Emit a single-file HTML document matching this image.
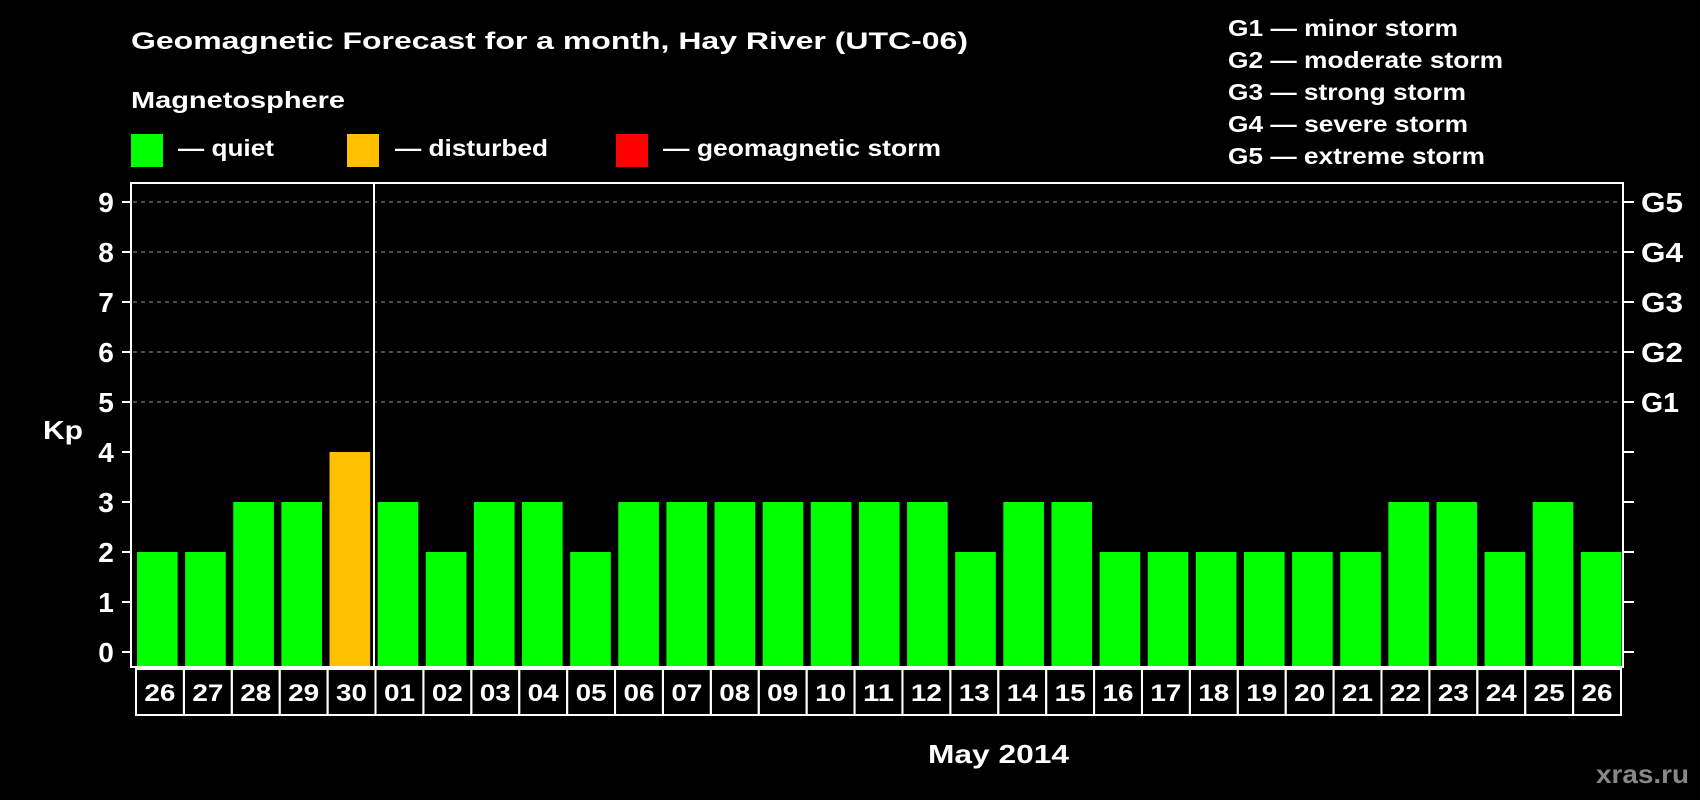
<!DOCTYPE html>
<html><head><meta charset="utf-8"><style>
html,body{margin:0;padding:0;background:#000;}
svg{display:block;font-family:"Liberation Sans",Arial,sans-serif;font-weight:bold;}
</style></head><body>
<svg width="1700" height="800" viewBox="0 0 1700 800" xmlns="http://www.w3.org/2000/svg">
<rect width="1700" height="800" fill="#000"/>
<g fill="#fff" lengthAdjust="spacingAndGlyphs">
<text x="131" y="49" font-size="24" textLength="837" lengthAdjust="spacingAndGlyphs">Geomagnetic Forecast for a month, Hay River (UTC-06)</text>
<text x="131" y="108" font-size="23" textLength="214" lengthAdjust="spacingAndGlyphs">Magnetosphere</text>
<text x="178" y="156" font-size="23" textLength="96" lengthAdjust="spacingAndGlyphs">— quiet</text>
<text x="395" y="156" font-size="23" textLength="153" lengthAdjust="spacingAndGlyphs">— disturbed</text>
<text x="663" y="156" font-size="23" textLength="278" lengthAdjust="spacingAndGlyphs">— geomagnetic storm</text>
<text x="1228" y="36" font-size="23" textLength="230" lengthAdjust="spacingAndGlyphs">G1 — minor storm</text>
<text x="1228" y="68" font-size="23" textLength="275" lengthAdjust="spacingAndGlyphs">G2 — moderate storm</text>
<text x="1228" y="100" font-size="23" textLength="238" lengthAdjust="spacingAndGlyphs">G3 — strong storm</text>
<text x="1228" y="132" font-size="23" textLength="240" lengthAdjust="spacingAndGlyphs">G4 — severe storm</text>
<text x="1228" y="164" font-size="23" textLength="257" lengthAdjust="spacingAndGlyphs">G5 — extreme storm</text>
</g>
<rect x="131" y="134" width="32" height="33" fill="#00ff00"/>
<rect x="347" y="134" width="32" height="33" fill="#ffc000"/>
<rect x="616" y="134" width="32" height="33" fill="#ff0000"/>
<g id="grid" stroke="#999" stroke-dasharray="4,4" stroke-width="1">
<line x1="133" x2="1621" y1="202" y2="202"/><line x1="133" x2="1621" y1="252" y2="252"/>
<line x1="133" x2="1621" y1="302" y2="302"/><line x1="133" x2="1621" y1="352" y2="352"/>
<line x1="133" x2="1621" y1="402" y2="402"/>
</g>
<g id="bars"></g>
<rect x="131" y="183" width="1492" height="484" fill="none" stroke="#fff" stroke-width="2"/>
<line x1="374" y1="183" x2="374" y2="667" stroke="#fff" stroke-width="2"/>
<g id="ticks" stroke="#fff" stroke-width="2"></g>
<g id="ylab" fill="#fff" font-size="28" text-anchor="middle"></g>
<text x="43" y="439" fill="#fff" font-size="26" textLength="40" lengthAdjust="spacingAndGlyphs">Kp</text>
<g id="dates" font-size="24" fill="#fff" text-anchor="middle"></g>
<text x="928" y="763" fill="#fff" font-size="26" textLength="141" lengthAdjust="spacingAndGlyphs">May 2014</text>
<text x="1596" y="783" fill="#888" font-size="26" textLength="93" lengthAdjust="spacingAndGlyphs">xras.ru</text>
<script>
var ns="http://www.w3.org/2000/svg";
function el(p,t,a,txt){var e=document.createElementNS(ns,t);for(var k in a)e.setAttribute(k,a[k]);if(txt!==undefined)e.textContent=txt;document.getElementById(p).appendChild(e);return e;}
var d=[2,2,3,3,4,3,2,3,3,2,3,3,3,3,3,3,3,2,3,3,2,2,2,2,2,2,3,3,2,3,2];
var lab=["26","27","28","29","30"];for(var i=1;i<=26;i++)lab.push((i<10?"0":"")+i);
var w=1492/31, cw=1485/31;
for(var i=0;i<31;i++){var x=131+i*w;
el("bars","rect",{x:x+6,y:652-50*d[i],width:w-6-1.5,height:15+50*d[i],fill:d[i]>=4?"#ffc000":"#00ff00"});
var cx=136+i*cw;
el("dates","rect",{x:cx,y:669,width:cw,height:46,fill:"none",stroke:"#fff","stroke-width":2});
el("dates","text",{x:cx+cw/2,y:701,textLength:31,lengthAdjust:"spacingAndGlyphs"},lab[i]);}
var g={5:"G1",6:"G2",7:"G3",8:"G4",9:"G5"};
for(var v=0;v<=9;v++){var y=652-50*v;
el("ticks","line",{x1:122,x2:131,y1:y,y2:y});el("ticks","line",{x1:1623,x2:1634,y1:y,y2:y});
el("ylab","text",{x:106,y:y+10},String(v));
if(g[v])el("ylab","text",{x:1641,y:y+10,"text-anchor":"start",textLength:v==5?38:42,lengthAdjust:"spacingAndGlyphs"},g[v]);}
</script>
</svg>
</body></html>
